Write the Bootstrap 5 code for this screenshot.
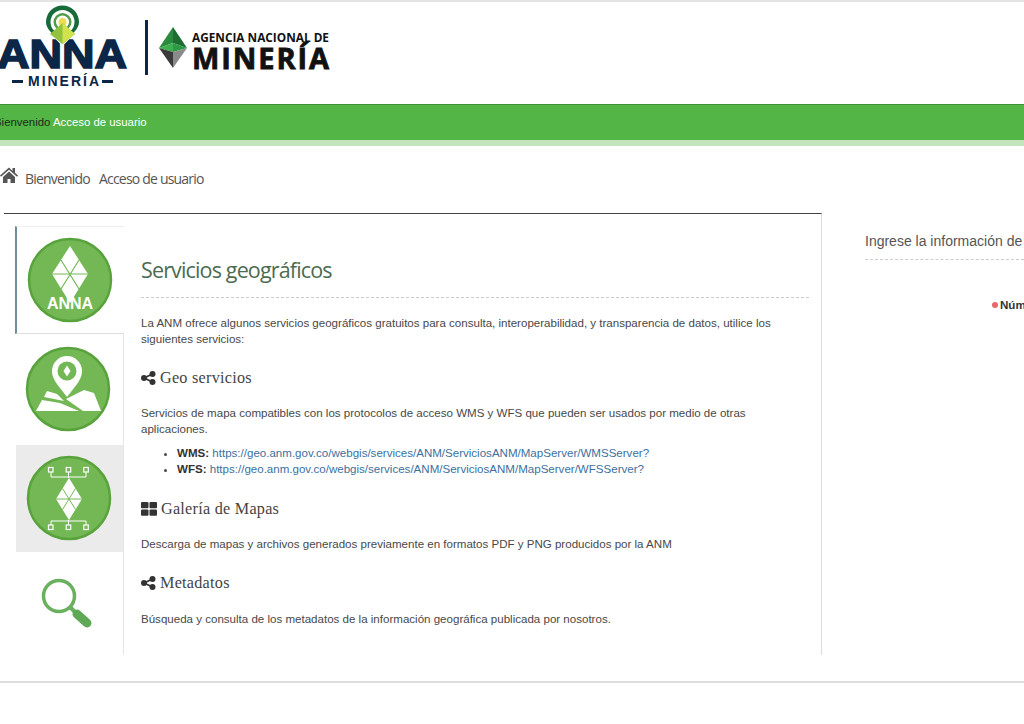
<!DOCTYPE html>
<html lang="es">
<head>
<meta charset="utf-8">
<title>Agencia Nacional de Minería</title>
<link href="https://cdn.jsdelivr.net/npm/bootstrap@5.3.0/dist/css/bootstrap.min.css" rel="stylesheet">
<style>
html,body{height:724px;overflow:hidden;background:#fff}
body{font-family:"Liberation Sans",Arial,sans-serif;font-size:11.56px;line-height:16px;color:#484848;width:1024px}
.site-head{height:104px;border-top:2px solid #e4e4e4}
.site-head svg{display:block}
.logo-anna{font-family:"Liberation Sans",sans-serif;font-weight:700;fill:#0c2647}
.logo-anna-big{stroke:#0c2647;stroke-width:1.600px}
.logo-dark{font-family:"Open Sans",sans-serif;font-weight:700;fill:#111}
.logo-dark-big{stroke:#111;stroke-width:.8px}
.green-bar{height:42px;background:#53b545;border-top:1px solid #3f8f37;border-bottom:6px solid #c3e5bc;margin-left:-6px;line-height:35px;font-size:11.4px;color:#1c2a18}
.green-bar a{color:#fff;text-decoration:none}
.crumbs{height:67px;padding-top:23px;font-family:"Open Sans",sans-serif;font-size:14px;line-height:19px;letter-spacing:-.8px;color:#555;gap:9px}
.crumbs svg{margin-right:-2px;margin-top:-3px}
.main-zone{align-items:flex-start}
.panel-main{margin-left:4px;width:818px;height:442px;border-top:1px solid #444;border-right:1px solid #ddd;padding-top:12px}
.tab-col{width:109px;margin-left:11px;flex:none;border-right:1px solid #e6e6e6;height:429px}
.tab-cell{height:108px;width:108px;padding-top:9px;padding-right:2px;text-align:center}
.tab-cell.on{border-left:2px solid #6f8d9b;border-top:1px solid #eee;border-bottom:1px solid #ddd;width:109px;margin-right:-1px;background:#fff;position:relative}
.tab-cell.map-cell{height:111px;padding-top:11px}
.tab-cell.shade{background:#ebebeb;height:107px;width:107px;margin-left:1px;padding-right:1px}
.tab-pane-txt{padding:29px 12px 0 17px;flex:1;min-width:0}
.pane-title{font-family:"Open Sans",sans-serif;font-size:21.5px;font-weight:400;letter-spacing:-.85px;line-height:30px;color:#4c6b50;margin:0;padding-bottom:12px;border-bottom:1px dashed #ccc}
.pane-lead{margin:17px 0 0}
.pane-h{font-family:"Liberation Serif",serif;font-size:16.2px;font-weight:400;line-height:20px;letter-spacing:.25px;color:#444;margin:0;display:flex;align-items:center;gap:4px}
.gap-a{margin-top:21px}
.gap-b{margin-top:22px}
.gap-c{margin-top:21px}
.para-a{margin:17px 0 0}
.para-b{margin:17px 0 0}
.para-c{margin:18px 0 0}
.pane-list{margin:8px 0 0;padding-left:36px}
.pane-list a{color:#3b70a0;text-decoration:none}
.pane-list b{color:#333}
.side-panel{width:202px;padding:19px 0 0 43px;flex:none;overflow:hidden;white-space:nowrap}
.side-title{font-size:14px;line-height:19px;color:#555;padding-bottom:8px;border-bottom:1px dashed #ccc;width:300px}
.side-field{margin:37px 0 0 127px;font-weight:700;font-size:11.6px;color:#333;display:flex;align-items:center;gap:2px}
.red-dot{width:6px;height:6px;border-radius:50%;background:#e8696b;flex:none}
.foot-line{margin:26px 0 0;border-top:2px solid #ddd}
</style>
</head>
<body>
<header class="site-head">
<svg width="360" height="102" viewBox="0 0 360 102" aria-label="Logo">
  <text class="logo-anna logo-anna-big" x="-3" y="66" font-size="41" textLength="130" lengthAdjust="spacingAndGlyphs">ANNA</text>
  <rect x="12" y="78" width="11" height="3" fill="#0c2647"/>
  <rect x="102" y="78" width="11" height="3" fill="#0c2647"/>
  <text class="logo-anna" x="28" y="84" font-size="14" textLength="71" lengthAdjust="spacing">MINERÍA</text>
  <path d="M62.500 44C52 33 44.500 28 44.500 20a18 18 0 0 1 36 0C80.500 28 73 33 62.500 44Z" fill="#fff"/>
  <path d="M62.500 42C52 31 46 27 46 20a16.500 16.500 0 0 1 33 0C79 27 73 31 62.500 42Z" fill="#176b3a"/>
  <circle cx="62.500" cy="20" r="12" fill="#fff"/>
  <circle cx="62.500" cy="20" r="9" fill="#4f9d4a"/>
  <circle cx="62.500" cy="20" r="6.500" fill="#fff"/>
  <circle cx="62.500" cy="20" r="4" fill="#eedc55"/>
  <path d="M62.500 21 75 32 62.500 42 50 32Z" fill="#93c23c"/>
  <path d="M62.500 21 75 32 62.500 42Z" fill="#d2e24e"/>
  <rect x="145" y="18" width="3" height="55" fill="#0c2647"/>
  <path d="M173 25 159 46 173 41Z" fill="#2a8a3e"/>
  <path d="M173 25 187 46 173 41Z" fill="#1d6d32"/>
  <path d="M159 46 173 41 173 50Z" fill="#3fb050"/>
  <path d="M187 46 173 41 173 50Z" fill="#2c9a45"/>
  <path d="M159 46 173 50 173 66Z" fill="#3a3a3a"/>
  <path d="M187 46 173 50 173 66Z" fill="#8a8a8a"/>
  <text class="logo-dark" x="192" y="40" font-size="12.500" font-weight="600" textLength="137" lengthAdjust="spacingAndGlyphs">AGENCIA NACIONAL DE</text>
  <text class="logo-dark logo-dark-big" x="192" y="67" font-size="29" textLength="137" lengthAdjust="spacing">MINERÍA</text>
</svg>
</header>

<nav class="green-bar">Bienvenido <a href="#">Acceso de usuario</a></nav>

<div class="crumbs d-flex">
  <svg width="18" height="18" viewBox="0 0 18 18"><path d="M9 1.500 0 9.500l1 1.200L9 3.800l8 6.900 1-1.200-3-2.700V2h-2.500v3.100Z" fill="#555"/><path d="M3 11 9 5.500 15 11v6h-4.500v-4h-3v4H3Z" fill="#555"/></svg>
  <span>Bienvenido</span><span>Acceso de usuario</span>
</div>

<div class="main-zone d-flex">
  <section class="panel-main d-flex">
    <div class="tab-col">
      <div class="tab-cell on">
        <svg width="88" height="88" viewBox="0 0 88 88">
          <circle cx="44" cy="44" r="41" fill="#74b856" stroke="#58a33c" stroke-width="2.500"/>
          <path d="M44 10 62 38 44 67 26 38Z" fill="#fff"/>
          <path d="M26 38H62M35 24 53 53M53 24 35 53" stroke="#74b856" stroke-width="1.200"/>
          <text x="44" y="73" text-anchor="middle" font-family="Liberation Sans" font-weight="700" font-size="16" fill="#fff">ANNA</text>
        </svg>
      </div>
      <div class="tab-cell map-cell">
        <svg width="88" height="88" viewBox="0 0 88 88">
          <circle cx="44" cy="44" r="41" fill="#74b856" stroke="#58a33c" stroke-width="2.500"/>
          <path d="M43 52C33 39 28 34 28 26a15 15 0 0 1 30 0C58 34 53 39 43 52Z" fill="#fff"/>
          <circle cx="43" cy="26" r="9.500" fill="#74b856"/>
          <path d="M43 20.500 46.500 26 43 31.500 39.500 26Z" fill="#fff"/>
          <path d="M23 46 33 49 40 56 20 52Z" fill="#fff"/>
          <path d="M12 66 18 55 36 58 55 66Z" fill="#fff"/>
          <path d="M42 54 60 45 70 48 77 66H59Z" fill="#fff"/>
        </svg>
      </div>
      <div class="tab-cell shade">
        <svg width="88" height="88" viewBox="0 0 88 88">
          <circle cx="44" cy="44" r="41" fill="#74b856" stroke="#58a33c" stroke-width="2.500"/>
          <path d="M44 24 57 45 44 66 31 45Z" fill="#fff"/>
          <path d="M31 45H57M37.500 34.500 50.500 55.500M50.500 34.500 37.500 55.500" stroke="#74b856" stroke-width="1"/>
          <path d="M26 18V23H61V18M43.500 18V24M26 71V67H61V71M43.500 71V66" fill="none" stroke="#fff" stroke-width="1"/>
          <g fill="#74b856" stroke="#fff" stroke-width="1.200">
            <rect x="23.500" y="13.500" width="4.500" height="4.500"/><rect x="41.200" y="13.500" width="4.500" height="4.500"/><rect x="58.800" y="13.500" width="4.500" height="4.500"/>
            <rect x="23.500" y="71" width="4.500" height="4.500"/><rect x="41.200" y="71" width="4.500" height="4.500"/><rect x="58.800" y="71" width="4.500" height="4.500"/>
          </g>
        </svg>
      </div>
      <div class="tab-cell">
        <svg width="88" height="88" viewBox="0 0 88 88">
          <circle cx="35" cy="35" r="15.500" fill="none" stroke="#6ab05f" stroke-width="3.500"/>
          <path d="M46 46 52 52" stroke="#6ab05f" stroke-width="4"/>
          <path d="M53 53 63 62" stroke="#5fa956" stroke-width="9" stroke-linecap="round"/>
        </svg>
      </div>
    </div>
    <div class="tab-pane-txt">
      <h2 class="pane-title">Servicios geográficos</h2>
      <p class="pane-lead">La ANM ofrece algunos servicios geográficos gratuitos para consulta, interoperabilidad, y transparencia de datos, utilice los siguientes servicios:</p>
      <h3 class="pane-h gap-a">
        <svg width="15" height="14" viewBox="0 0 15 14"><circle cx="11.500" cy="3" r="3" fill="#333"/><circle cx="11.500" cy="11" r="3" fill="#333"/><circle cx="3" cy="7" r="3" fill="#333"/><path d="M3 7 11.500 3M3 7 11.500 11" stroke="#333" stroke-width="1.800"/></svg>
        Geo servicios</h3>
      <p class="para-a">Servicios de mapa compatibles con los protocolos de acceso WMS y WFS que pueden ser usados por medio de otras aplicaciones.</p>
      <ul class="pane-list">
        <li><b>WMS:</b> <a href="#">https://geo.anm.gov.co/webgis/services/ANM/ServiciosANM/MapServer/WMSServer?</a></li>
        <li><b>WFS:</b> <a href="#">https://geo.anm.gov.co/webgis/services/ANM/ServiciosANM/MapServer/WFSServer?</a></li>
      </ul>
      <h3 class="pane-h gap-b">
        <svg width="16" height="14" viewBox="0 0 16 14"><rect width="7.500" height="6.300" rx="1" fill="#333"/><rect x="8.500" width="7.500" height="6.300" rx="1" fill="#333"/><rect y="7.500" width="7.500" height="6.300" rx="1" fill="#333"/><rect x="8.500" y="7.500" width="7.500" height="6.300" rx="1" fill="#333"/></svg>
        Galería de Mapas</h3>
      <p class="para-b">Descarga de mapas y archivos generados previamente en formatos PDF y PNG producidos por la ANM</p>
      <h3 class="pane-h gap-c">
        <svg width="15" height="14" viewBox="0 0 15 14"><circle cx="11.500" cy="3" r="3" fill="#333"/><circle cx="11.500" cy="11" r="3" fill="#333"/><circle cx="3" cy="7" r="3" fill="#333"/><path d="M3 7 11.500 3M3 7 11.500 11" stroke="#333" stroke-width="1.800"/></svg>
        Metadatos</h3>
      <p class="para-c">Búsqueda y consulta de los metadatos de la información geográfica publicada por nosotros.</p>
    </div>
  </section>
  <aside class="side-panel">
    <div class="side-title">Ingrese la información de</div>
    <div class="side-field"><span class="red-dot"></span>Número</div>
  </aside>
</div>
<div class="foot-line"></div>
</body>
</html>
